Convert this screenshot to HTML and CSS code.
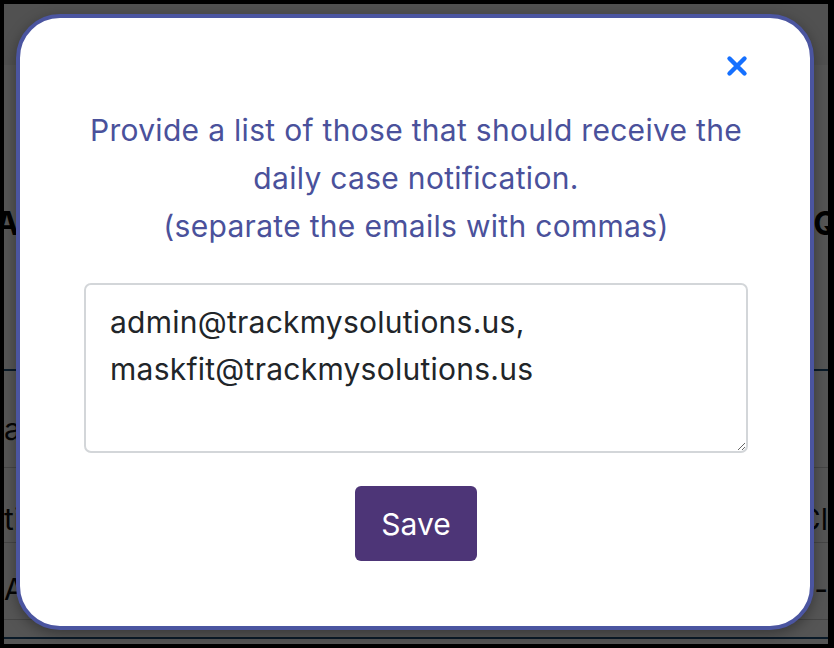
FILE: index.html
```html
<!doctype html>
<html>
    <head>
        <meta charset="utf-8">
        <title>Daily case notification</title>
        <link rel="stylesheet" href="styles.css">
    </head>

    <body>
        <div class="screen">
            <div class="page">
                <div class="topbar"></div>
                <div class="pagetitle">
                    <span class="left">A</span><span class="right">Q</span>
                </div>
                <div class="tabline"></div>
                <div class="row row1">
                    <span class="left">a</span><span class="right"></span>
                </div>
                <div class="row row2">
                    <span class="left">ti</span><span class="right">Cl</span>
                </div>
                <div class="row row3">
                    <span class="left">Al</span><span class="right">-</span>
                </div>
                <div class="footline"></div>
            </div>

            <div class="overlay">
                <div class="modal">
                    <div class="modaltop">
                        <button class="close" aria-label="Close">
                            <svg width="22" height="22" viewBox="0 0 22 22">
                                <path d="M3.5 3.5 L18.5 18.5 M18.5 3.5 L3.5 18.5" stroke="#1570ff" stroke-width="4.4" stroke-linecap="round" fill="none"/>
                            </svg>
                        </button>
                    </div>
                    <p class="prompt">
                        Provide a list of those that should receive the<br>
                        daily case notification.<br>
                        (separate the emails with commas)
                    </p>
                    <textarea class="emails">admin@trackmysolutions.us,
maskfit@trackmysolutions.us</textarea>
                    <button class="save">Save</button>
                </div>
            </div>
        </div>
    </body>

</html>
```

FILE: styles.css
```css
html{
    background-color: #000;
}

body{
    margin: 0;
    font-family: Inter, 'Noto Sans', sans-serif;
}

.screen{
    position: relative;
    margin: 4px 6px 4px 4px;
    height: 640px;
    overflow: hidden;
    background-color: #fff;
}

/* page behind the dialog */
.topbar{
    height: 61px;
    background-color: #f2f2f2;
}

.pagetitle{
    display: flex;
    justify-content: space-between;
    margin-top: 139px;
    font-size: 32px;
    font-weight: bold;
    line-height: 40px;
    color: #000;
}

.pagetitle .left{
    margin-left: -9px;
}

.pagetitle .right{
    margin-right: -10px;
}

.tabline{
    margin-top: 125px;
    border-bottom: 2px solid #1f4f7a;
}

.row{
    display: flex;
    justify-content: space-between;
    font-size: 30px;
    line-height: 36px;
    color: #111;
    border-bottom: 1px solid #cfcfcf;
    box-sizing: border-box;
}

.row1{
    height: 97px;
    padding-top: 40px;
}

.row2{
    height: 75px;
    padding-top: 33px;
}

.row3{
    height: 77px;
    padding-top: 28px;
}

.footline{
    margin-top: 17px;
    border-bottom: 2px solid #1f4f7a;
}

/* dialog */
.overlay{
    position: absolute;
    left: 0;
    right: 0;
    top: 0;
    bottom: 0;
    display: flex;
    padding: 10px 14px 14px 12px;
    background-color: rgba(0, 0, 0, 0.667);
}

.modal{
    flex: 1;
    display: flex;
    flex-direction: column;
    align-items: center;
    padding: 37px 62px 0 64px;
    background-color: #fff;
    border: 4px solid #4b55a0;
    border-radius: 44px;
    box-shadow: 0 4px 14px rgba(0, 0, 0, 0.35);
}

.modaltop{
    align-self: stretch;
    display: flex;
    justify-content: flex-end;
}

.close{
    display: block;
    width: 22px;
    height: 22px;
    padding: 0;
    border: none;
    background: none;
    cursor: pointer;
}

.close svg{
    display: block;
}

.prompt{
    margin: 29px 0 33px;
    font-size: 30px;
    letter-spacing: 0.3px;
    line-height: 48px;
    text-align: center;
    color: #4a519b;
}

.emails{
    box-sizing: border-box;
    width: 100%;
    height: 170px;
    padding: 14px 24px;
    border: 2px solid #d3d6d9;
    border-radius: 7px;
    font-family: Inter, 'Noto Sans', sans-serif;
    font-size: 30px;
    letter-spacing: 0.25px;
    line-height: 47px;
    color: #212529;
    resize: vertical;
}

.save{
    margin-top: 33px;
    width: 122px;
    height: 75px;
    border: none;
    border-radius: 6px;
    background-color: #4d3577;
    color: #fff;
    font-family: Inter, 'Noto Sans', sans-serif;
    font-size: 30px;
}
```
